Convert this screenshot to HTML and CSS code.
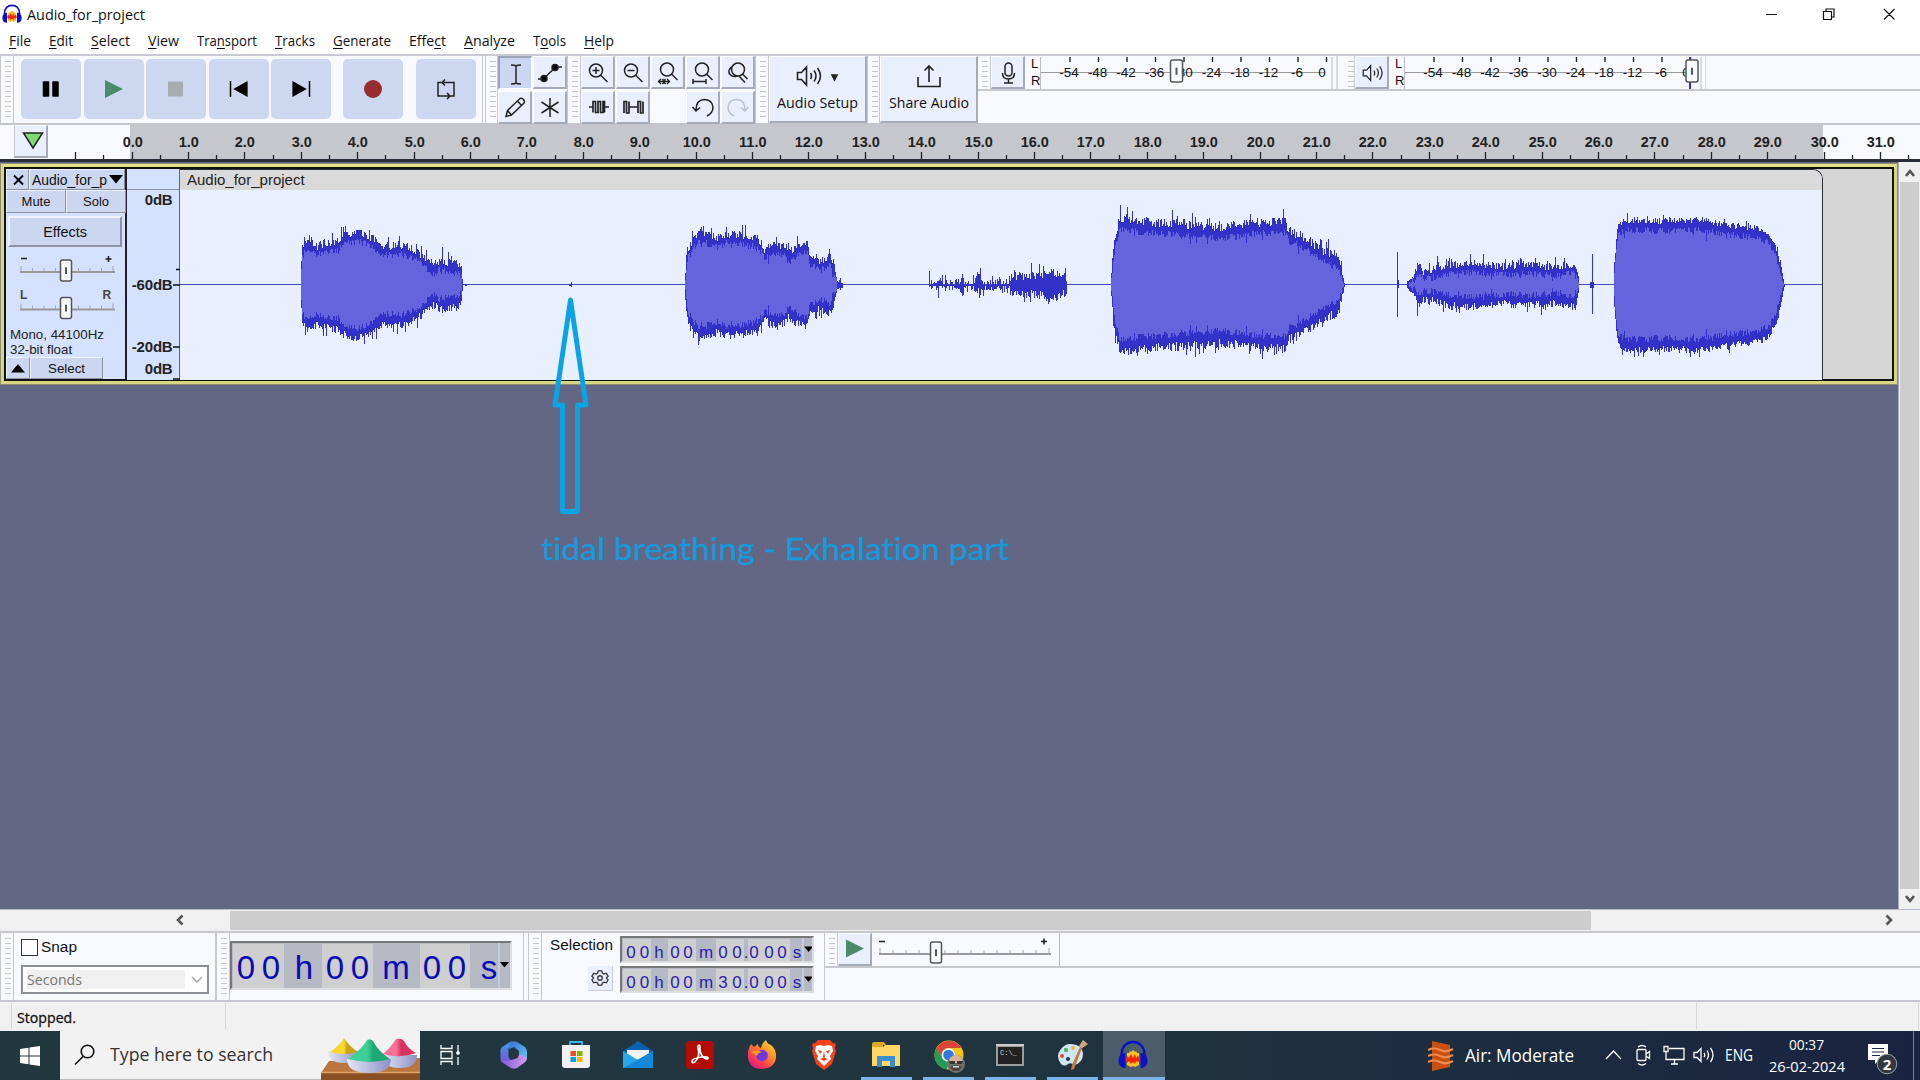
FILE: index.html
```html
<!DOCTYPE html>
<html lang="en">
<head>
<meta charset="utf-8">
<title>Audio_for_project</title>
<link rel="stylesheet" href="styles.css">
</head>
<body>
<svg width="0" height="0" class="defs">
  <defs>
    <linearGradient id="bowl" x1="0" x2="1"><stop offset="0" stop-color="#e4e6f5"/><stop offset="1" stop-color="#8d90c4"/></linearGradient>
    <linearGradient id="yel" x1="0" x2="1"><stop offset=".5" stop-color="#f7d92c"/><stop offset=".6" stop-color="#c9a21a"/></linearGradient>
    <linearGradient id="grn" x1="0" x2="1"><stop offset=".45" stop-color="#3fd09a"/><stop offset=".6" stop-color="#1fa873"/></linearGradient>
    <linearGradient id="pnk" x1="0" x2="1"><stop offset=".4" stop-color="#f7709a"/><stop offset=".55" stop-color="#d8305f"/></linearGradient>
    <linearGradient id="ff" x1="1" y1="0" x2=".2" y2="1"><stop offset="0" stop-color="#fff04a"/><stop offset=".4" stop-color="#ff9226"/><stop offset=".75" stop-color="#ff3b50"/><stop offset="1" stop-color="#e01490"/></linearGradient>
    <linearGradient id="m1" x1="0" y1="0" x2="0" y2="1"><stop offset="0" stop-color="#3aa0ea"/><stop offset="1" stop-color="#7a4fd0"/></linearGradient>
    <linearGradient id="m2" x1="0" y1="0" x2="1" y2="1"><stop offset="0" stop-color="#3d6fd8"/><stop offset="1" stop-color="#5ac8f2"/></linearGradient>
    <linearGradient id="m3" x1="0" y1="0" x2="1" y2="0"><stop offset="0" stop-color="#7b5bd6"/><stop offset="1" stop-color="#d79af0"/></linearGradient>
    <symbol id="audacity" viewBox="0 0 30 30">
      <path d="M9 13h2l1-2 1 1 2-2 2 2 1-1 1 2h2v12l-2 1-2 1-2-1-2 1-2-1-2-1z" fill="#ffc02a"/>
      <path d="M8 18l2-2 1 2 2-4 2 4 2-4 1 4 2-2 2 2v3l-2 1-2-1-1 3-2-2-2 2-2-3-1 2-2-2z" fill="#f0280a"/>
      <path d="M3.600 15C3.600 6 9 2 15 2s11.400 4 11.400 13" fill="none" stroke="#0a12c8" stroke-width="2.400"/>
      <path d="M7.500 13v15C3 28 .500 25 .500 20.500S3 13 7.500 13zM22.500 13v15c4.500 0 7-3 7-7.500S27 13 22.500 13z" fill="#0a12c8"/>
    </symbol>
    <symbol id="speaker" viewBox="0 0 28 22"><path d="M1.500 7.500h4l5-5.500v18l-5-5.500h-4zM14.500 8q2 3 0 6M18 5.500q4 5.500 0 11M21.500 3q6 8 0 16"/></symbol>
  </defs>
</svg>

<header class="title">
  <svg class="appicon" viewBox="0 0 30 30"><use href="#audacity"/></svg>
  <span class="fit ui t14" data-w="118">Audio_for_project</span>
  <svg class="winbtns" width="150" height="29" fill="none" stroke="#111" stroke-width="1.200"><path d="M10 14.500h11M67.500 11.500h8v8h-8zM70 11V9h8v8h-2.500M128 9l10.500 10.500M138.500 9L128 19.500"/></svg>
</header>

<nav class="menu ui">
  <span class="fit" data-w="22"><u>F</u>ile</span><span class="fit" data-w="24"><u>E</u>dit</span><span class="fit" data-w="39"><u>S</u>elect</span><span class="fit" data-w="31"><u>V</u>iew</span><span class="fit" data-w="60">Tra<u>n</u>sport</span><span class="fit" data-w="40"><u>T</u>racks</span><span class="fit" data-w="58"><u>G</u>enerate</span><span class="fit" data-w="37">Effe<u>c</u>t</span><span class="fit" data-w="51"><u>A</u>nalyze</span><span class="fit" data-w="33">T<u>o</u>ols</span><span class="fit" data-w="30"><u>H</u>elp</span>
</nav>

<section class="tools">
  <i class="grip g-first"></i>
  <div class="transport">
    <button><svg viewBox="0 0 60 60"><path d="M22.500 23h5v14h-5zM32 23h5v14h-5z" fill="#000" stroke="#000" stroke-width="1.500" stroke-linejoin="round"/></svg></button>
    <button><svg viewBox="0 0 60 60"><path d="M21 21l18 9-18 9z" fill="#4b8b6b"/></svg></button>
    <button><svg viewBox="0 0 60 60"><path d="M22 22.500h15v15H22z" fill="#a7abb2"/></svg></button>
    <button><svg viewBox="0 0 60 60"><path d="M38 23v14l-12.500-7z" fill="#000" stroke="#000" stroke-width="1.200"/><path d="M21.500 22v16" stroke="#000" stroke-width="1.500"/></svg></button>
    <button><svg viewBox="0 0 60 60"><path d="M22 23v14l12.500-7z" fill="#000" stroke="#000" stroke-width="1.200"/><path d="M38.500 22v16" stroke="#000" stroke-width="1.500"/></svg></button>
    <button class="ml"><svg viewBox="0 0 60 60"><circle cx="30" cy="30" r="9" fill="#962d2f"/></svg></button>
    <button class="ml"><svg viewBox="0 0 60 60" fill="none" stroke="#222" stroke-width="1.500"><path d="M26 23.500h-4V37h11M27.500 23.500H38V37h-4M29 20.500l-3 3 3 3M31 34l3 3-3 3"/></svg></button>
  </div>
  <i class="grip"></i>
  <div class="grid two">
    <button class="tb on"><svg viewBox="0 0 34 33"><path d="M12 8q4 0 5 1 1-1 5-1M17 9v17M12 27q4 0 5-1 1 1 5 1"/></svg></button>
    <button class="tb"><svg viewBox="0 0 34 33"><path d="M5 23h5L23 11h6"/><circle cx="11" cy="22.500" r="3" fill="#000"/><circle cx="22" cy="11.500" r="3" fill="#000"/></svg></button>
    <button class="tb"><svg viewBox="0 0 34 33"><path d="M8 25.500l1.500-6L22 7.500q2-1 3.500 1t.500 3.500L13.500 24zM19.500 10l4 4.500M9.500 19.500l4 4.500"/></svg></button>
    <button class="tb"><svg viewBox="0 0 34 33"><path d="M17 7v19M8.500 11l17 11M25.500 11l-17 11"/></svg></button>
  </div>
  <i class="grip g-edit"></i>
  <div class="grid five">
    <button class="tb"><svg viewBox="0 0 34 33"><circle cx="15" cy="14.500" r="6.500"/><path d="M19.500 19l7 7M11.500 14.500h7M15 11v7"/></svg></button>
    <button class="tb"><svg viewBox="0 0 34 33"><circle cx="15" cy="14.500" r="6.500"/><path d="M19.500 19l7 7M11.500 14.500h7"/></svg></button>
    <button class="tb"><svg viewBox="0 0 34 33"><circle cx="16" cy="13.500" r="6.500"/><path d="M20.500 18l6 6M7 25.500h12M10 23l-2.500 2.500L10 28M16 23l2.500 2.500L16 28M11.500 23l2 2.500-2 2.500M14.500 23l-2 2.500 2 2.500" stroke-width="1.300"/></svg></button>
    <button class="tb"><svg viewBox="0 0 34 33"><circle cx="16" cy="13.500" r="6.500"/><path d="M20.500 18l6 6M7 25.500h13M7 23v5M20 23v5"/></svg></button>
    <button class="tb"><svg viewBox="0 0 34 33"><circle cx="17" cy="13.500" r="6.500"/><path d="M21.500 18l5 5M11 11q-5 3-2 7.500 3 3 7 1.500M18 20l6 6.500"/></svg></button>
    <button class="tb"><svg viewBox="0 0 34 33"><path d="M8 16h4M23.500 16H28M12 21.500v-11h2.500v11H17v-11h2.500v11H22v-11h1.500v11" stroke-width="1.700"/></svg></button>
    <button class="tb"><svg viewBox="0 0 34 33"><path d="M8 22V10.500h2.500V22H13V10.500M13 16h9M22 22V10.500h2.500V22H27V10.500" stroke-width="1.700"/></svg></button>
    <span></span>
    <button class="tb"><svg viewBox="0 0 34 33"><path d="M10 19q0-10 8-10.500 8 0 9 7.500 0 6-6 9M6.500 16l3.500 4 4-3.500"/></svg></button>
    <button class="tb dim"><svg viewBox="0 0 34 33"><path d="M24 19q0-10-8-10.500-8 0-9 7.500 0 6 6 9M27.500 16L24 20l-4-3.500"/></svg></button>
  </div>
  <i class="grip g-audio"></i>
  <button class="big"><svg width="44" height="26" class="ln"><use href="#speaker" x="0" y="1" width="28" height="22"/><path d="M36 11h5l-2.500 5z" fill="#222"/></svg><span class="fit ui" data-w="81">Audio Setup</span></button>
  <i class="grip"></i>
  <button class="big share"><svg width="26" height="26" class="ln"><path d="M2 13v9.500h22V13M13 18V2M8.500 6.500L13 2l4.500 4.500"/></svg><span class="fit ui" data-w="80">Share Audio</span></button>
  <div class="meters">
    <div class="meterrow">
      <i class="grip short"></i>
      <button class="tb mic"><svg viewBox="0 0 34 33"><rect x="14" y="7" width="7" height="13" rx="3.500"/><path d="M11.500 17q0 6 6 6t6-6M17.500 23v4M13 27h9"/></svg></button>
      <div class="lr"><span>L</span><span>R</span></div>
      <svg class="meter" id="rec" width="304" height="33"></svg>
      <i class="grip short g2"></i>
      <button class="tb"><svg viewBox="0 0 34 33"><use href="#speaker" x="7" y="8" width="23" height="18"/></svg></button>
      <div class="lr"><span>L</span><span>R</span></div>
      <svg class="meter" id="play" width="302" height="33"></svg>
    </div>
  </div>
</section>

<section class="ruler">
  <button class="tb pin"><svg viewBox="0 0 34 33"><path d="M9.500 8h19L19 23z" fill="#7fd973" stroke="#222"/></svg></button>
  <svg id="time" width="1872" height="34"></svg>
</section>

<main class="work">
  <div class="tracks">
    <div class="track">
      <div class="panel">
        <div class="row r1"><button class="x"><svg width="22" height="20"><path d="M7 5.500l9 9M16 5.500l-9 9" stroke="#000" stroke-width="1.800"/></svg></button><button class="name"><span class="fit" data-w="75">Audio_for_p</span><svg width="14" height="9"><path d="M0 0h14L7 8.500z"/></svg></button></div>
        <div class="row r2"><button>Mute</button><button>Solo</button></div>
        <button class="fx">Effects</button>
        <svg class="sliders" width="118" height="78"><g id="vol"></g><g id="pan"></g><path d="M14 9.500h6M98.500 10h6M101.500 7v6" stroke="#222" stroke-width="1.600"/><text x="13" y="50">L</text><text x="95.500" y="50">R</text></svg>
        <p class="info">Mono, 44100Hz<br>32-bit float</p>
        <div class="row r3"><button class="up"><svg width="14" height="9"><path d="M0 8.500h14L7 0z"/></svg></button><button class="sel">Select</button></div>
      </div>
      <svg class="db" width="53" height="211"><path d="M0 20.500h53" stroke="#8a8f9c"/><path d="M52.500 0v211" stroke="#666"/><path d="M46 116h7M46 178h7M46 210h7M49 100.500h4" stroke="#111" stroke-width="1.300"/><g text-anchor="end"><text x="45.500" y="36">0dB</text><text x="45.500" y="121">-60dB</text><text x="45.500" y="183">-20dB</text><text x="45.500" y="205">0dB</text></g></svg>
      <div class="clip"><div class="cliphead">Audio_for_project</div><svg id="wave" viewBox="180 190 1642 190" width="1642" height="190" shape-rendering="crispEdges"></svg></div>
    </div>
    <svg class="note" width="500" height="290" viewBox="530 290 500 290"><path d="M570.500 300l15.500 105h-8.500v106.500H562.500V405H555z" fill="none" stroke="#0aa3e6" stroke-width="5" stroke-linejoin="round"/><text x="541" y="559.500" textLength="468" lengthAdjust="spacingAndGlyphs">tidal breathing - Exhalation part</text></svg>
  </div>
  <div class="vscroll"><svg width="21" height="20"><path d="M7 14l4-5 4 5"/></svg><i></i><svg width="21" height="20"><path d="M7 7l4 5 4-5"/></svg></div>
</main>
<div class="hscroll"><svg width="20" height="22"><path d="M12.500 5.500L8 10l4.500 4.500"/></svg><i></i><svg width="20" height="22"><path d="M7.500 5.500L12 10l-4.500 4.500"/></svg></div>

<section class="bottom">
  <i class="grip"></i>
  <div class="snap"><label><i></i><span class="fit ar15" data-w="36">Snap</span></label><div class="combo"><span><b class="fit" data-w="55">Seconds</b></span><svg width="12" height="8"><path d="M1 1l5 5 5-5" fill="none" stroke="#aaa" stroke-width="1.500"/></svg></div></div>
  <i class="grip"></i>
  <div class="bigtime"><svg id="bt" width="279" height="46"></svg></div>
  <i class="grip g3"></i>
  <div class="selname"><span>Selection</span><button class="gear"><svg width="18" height="18" viewBox="0 0 18 18"><path d="M7 1h4l.600 2.600 1.800 1L16 3.800l2 3.200-2 2 2 2-2 3.400-2.600-.800-1.800 1L11 17H7l-.600-2.400-1.800-1L2 14.400 0 11l2-2-2-2 2-3.200 2.600.800 1.800-1z"/><circle cx="9" cy="9" r="2.500"/></svg></button></div>
  <div class="seltimes"><svg id="s0" width="194" height="27"></svg><svg id="s1" width="194" height="27"></svg></div>
  <div class="speed"><div class="speedrow"><i class="grip short"></i><button class="tb"><svg viewBox="0 0 34 33"><path d="M8 6.500l18 9-18 9z" fill="#4b8b6b" stroke="none"/></svg></button><svg id="spd" width="189" height="33"></svg></div></div>
</section>

<footer class="status ui"><span class="s0"></span><span class="s1"><b class="fit" data-w="59">Stopped.</b></span><span class="s2"></span><span class="s3"></span></footer>

<div class="taskbar ui">
  <div class="start"><svg width="20" height="20" fill="#fff"><path d="M0 3l8.500-1.300V9.500H0zM9.500 1.500L20 0v9.500H9.500zM0 10.500h8.500v7.800L0 17zM9.500 10.500H20V20L9.500 18.500z"/></svg></div>
  <div class="search"><svg width="22" height="22" fill="none" stroke="#111" stroke-width="1.600"><circle cx="13.500" cy="7.500" r="6.300"/><path d="M9 12.500L1 20.500"/></svg><span class="fit" data-w="163">Type here to search</span>
    <svg class="holi" width="100" height="49"><path d="M9 30l-8 12v7h99V27z" fill="#b9763f"/><path d="M1 42h99v7H1z" fill="#8a4f22"/><path d="M1 41.500h99" stroke="#e2a564" stroke-width="1.500"/><path d="M8 20h32q0 12-16 12T8 20z" fill="url(#bowl)"/><path d="M10 21Q20 14 24 7q5 8 14 14-14 4-28 0z" fill="url(#yel)"/><path d="M62 24h35q0 13-17 13T62 24z" fill="url(#bowl)"/><path d="M63 23Q72 15 76 8q6-1 8 2 4 8 12 12-16 6-33 1z" fill="url(#pnk)"/><path d="M27 28h44q0 14-22 14T27 28z" fill="url(#bowl)"/><path d="M28 28Q42 18 47 9q3-2 6 1 5 10 17 18-20 6-42 0z" fill="url(#grn)"/></svg>
  </div>
  <div class="apps">
    <div class="app tv"><svg width="22" height="22" fill="none" stroke="#fff" stroke-width="1.300"><path d="M2 1v3.500h11V1M2 7.500h11v7H2zM2 21v-3.500h11V21M19 1v8M19 13v8"/><circle cx="19" cy="9" r="1.200" fill="#fff"/></svg></div>
    <div class="app"><svg width="30" height="30"><path d="M11 2L3 7Q1 9 1.500 12v8l8 4 3-3-3-4V8l6-5q-2-2-4.500-1z" fill="url(#m1)"/><path d="M11 2q4-1.500 7 0l8 5q2 2 2 5v7l-8-3v-5l-5-4-5 2z" fill="url(#m2)"/><path d="M28 18q0 3-3 5l-7 5q-3 1.500-6 0l-8-5q-2-1-2.500-3l8 1 9-3 2-4z" fill="url(#m3)"/></svg></div>
    <div class="app"><svg width="30" height="30"><path d="M9 6V2h12v4" fill="none" stroke="#3fb2e6" stroke-width="1.800"/><path d="M1 5h28v20q0 3-3 3H4q-3 0-3-3z" fill="#f1f1f1"/><path d="M9.500 11H15v5H9.500z" fill="#f04e1f"/><path d="M16 11h5.500v5H16z" fill="#7cb900"/><path d="M9.500 17H15v5H9.500z" fill="#00a0ea"/><path d="M16 17h5.500v5H16z" fill="#fdb700"/></svg></div>
    <div class="app"><svg width="32" height="30"><path d="M1 11L16 1l15 10v6H1z" fill="#0a5fae"/><path d="M5 10h22v10H5z" fill="#f3f3f3"/><path d="M1 11l15 9 15-9v17H1z" fill="#28a8ea"/><path d="M1 28l30-17v17z" fill="#1687d6"/></svg></div>
    <div class="app"><svg width="28" height="28"><rect width="28" height="28" rx="4" fill="#b30b00"/><path d="M6 20c0-3 16-6 16-3s-9-1-8-11c.500-3-3-2-2 1 2 7-1 12-3 14-2 1-3 1-3-1z" fill="none" stroke="#fff" stroke-width="1.700"/></svg></div>
    <div class="app"><svg width="30" height="30"><path d="M2 8l2-4 3 3 4-3q0 3 3 4 1-5 5-8 1 4 5 5 5 4 5 11 0 12-14 13Q2 29 1 17q-.500-5 1-9z" fill="url(#ff)"/><circle cx="15" cy="15.500" r="5.800" fill="#7038d8"/><path d="M4 12q6-3 11 0-5 1-5 4z" fill="#ff9a20"/></svg></div>
    <div class="app"><svg width="28" height="32"><path d="M8 1h12l3 3 3 1-1 4 1 3-4 13-8 6-8-6-4-13 1-3-1-4 3-1z" fill="#f4401b"/><path d="M6 7l4-1 4 1 4-1 4 1 1 5-3 5 1 3-7 7-7-7 1-3-3-5z" fill="#fff"/><path d="M8 11l4 1-2 3zM20 11l-4 1 2 3zM14 12l1 6-1 1-1-1zM10 20l4-1.500 4 1.500-4 2z" fill="#f4401b"/></svg></div>
    <div class="app run"><svg width="28" height="28"><path d="M0 3q0-2 2-2h10l2 3h-3v4H0z" fill="#e0a81c"/><path d="M0 6h11l2-2h15v21H0z" fill="#ffd766"/><path d="M5 15h18v11h-5v-6h-8v6H5z" fill="#3a8fd0"/></svg></div>
    <div class="app run"><svg class="chrome" width="32" height="34"><circle cx="15" cy="15" r="14.500" fill="#f3c519"/><path d="M2.500 8A14.500 14.500 0 0 1 27.500 8H15a7 7 0 0 0-6 11z" fill="#dd4337"/><path d="M2.500 8l7 12 6 1-3 8.500A14.500 14.500 0 0 1 2.500 8z" fill="#1f9d54"/><circle cx="14.500" cy="15" r="6.800" fill="#fff"/><circle cx="14.500" cy="15" r="5.300" fill="#2f78e6"/><circle cx="22" cy="24" r="9" fill="#77716c"/><path d="M15 19q7-8 14 0l-2 4h-10z" fill="#d9b394"/><path d="M15 21h6v3h-5zM23 21h6l-1 3h-5z" fill="#3a3633"/><path d="M16 27q6-4 12 0l-3 4h-6z" fill="#4a4542"/><path d="M19 26h6v1.500h-6z" fill="#ddd"/></svg></div>
    <div class="app run"><svg width="28" height="24"><path d="M0 1h28v22H0z" fill="#9a9c9e"/><path d="M2 4h24v17H2z" fill="#222"/><path d="M0 1h28v2H0z" fill="#ccc"/><text x="4" y="12" class="cmd">C:\_</text></svg></div>
    <div class="app run"><svg width="32" height="32"><path d="M14 5q12 0 13 10 0 9-9 11-3-3-6-1-3 3-7 0-6-8 0-15 4-5 9-5z" fill="#cfe6f5"/><circle cx="6" cy="17" r="2" fill="#e0473c"/><circle cx="10" cy="11" r="2.200" fill="#4db25b"/><circle cx="17" cy="9" r="2" fill="#f5b52e"/><circle cx="12" cy="20" r="2" fill="#22363f"/><path d="M27 1l5 4-7 5-2-3z" fill="#d0a878"/><path d="M24 8l2 1-8 21-3 1 1-5z" fill="#c9783a"/></svg></div>
    <div class="app run cur"><svg width="30" height="30"><use href="#audacity"/></svg></div>
  </div>
  <div class="tray">
    <svg class="air" width="26" height="30"><path d="M4 0l18 4v22L4 30z" fill="#c9500f"/><path d="M0 9q6-3 12 0t13-1M0 15q6-3 12 0t13-1M0 21q6-3 12 0t13-1" fill="none" stroke="#f08a50" stroke-width="2.200"/></svg>
    <span class="fit t18" data-w="109">Air: Moderate</span>
    <svg class="icons" width="112" height="24" fill="none" stroke="#fff" stroke-width="1.300"><path d="M1 16l7.500-8 7.500 8M32 7.500q0-1 1-1h7q1 0 1 1v9q0 1-1 1h-7q-1 0-1-1zM41 11l3.500-2.500v7L41 13M33 4q4-3 8 0M33 20.500q4 3 8 0M64 5.500h15v11H61v-5M69.500 17v4M66 21h7M59 3.500h4v5h-4zM61 8.500v3M89 9.500h3l4-4v13l-4-4h-3zM99 10q1.500 2 0 4M102 7.500q3 4.500 0 9M105.500 5q5 7 0 14"/></svg>
    <span class="fit t16 eng" data-w="28">ENG</span>
    <div class="clock"><span class="fit" data-w="35">00:37</span><span class="fit" data-w="76">26-02-2024</span></div>
    <svg class="notif" width="32" height="34"><path d="M1 2h20v16h-9l-4 4v-4H1z" fill="#fff"/><path d="M5 6.500h12M5 10h12M5 13.500h8" stroke="#1c2840" stroke-width="1.200"/><circle cx="20" cy="22" r="9.800" fill="#33373f" stroke="#9aa0a8"/><text x="20" y="27.500" text-anchor="middle">2</text></svg>
    <i class="peek"></i>
  </div>
</div>
<script src="app.js"></script>
</body>
</html>
```
FILE: app.js
```js
const $ = id => document.getElementById(id);

/* condensed labels: squeeze each to its column width */
document.querySelectorAll('.fit').forEach(el => {
  const w = +el.dataset.w, n = el.getBoundingClientRect().width;
  el.style.transform = `scaleX(${w / n})`;
  el.style.marginRight = `${w - n}px`;
});

/* timeline ruler */
let s = '<rect x="82" width="1693" height="34" fill="#c6c7cd"/>', ticks = '';
for (let i = -2; i <= 63; i++) {
  const x = Math.round(83.5 + i * 28.2) + .5, major = i % 2 === 0;
  ticks += `M${x} ${major ? 27 : 30}V34`;
  if (major && i >= 0) s += `<text x="${x + .3}" y="22">${(i / 2).toFixed(1)}</text>`;
}
$('time').innerHTML = s + `<path d="${ticks}" stroke="#222" stroke-width="1.3"/>`;

const thumb = (x, y, w = 12, h = 22) =>
  `<rect x="${x - w / 2}" y="${y}" width="${w}" height="${h}" rx="2" fill="#fafbff" stroke="#555" stroke-width="1.5"/><path d="M${x} ${y + h * .35}v${h * .32}" stroke="#555" stroke-width="2"/>`;

/* level meters */
function meter(id, end, knob) {
  let out = `<path d="M.5 1v32M${end + 1} 1v32M${end + 6} 0v33" stroke="#b9bcc4"/><path d="M1 16.500H${end - 7}" stroke="#999"/>`;
  for (let i = 0; i < 10; i++) {
    const x = 30 + i * 28.5;
    out += `<path d="M${x} 1v5" stroke="#222" stroke-width="1.4"/>`;
    const t = i === 9 ? '0' : String(-54 + i * 6), tx = i === 9 ? 282 : x - 1;
    out += `<text x="${tx}" y="20.500">${t}</text>`;
  }
  if (knob > 200) out += `<path d="M${knob - 2} 1v32" stroke="#3030d0" stroke-width="2"/>`;
  $(id).innerHTML = out + thumb(knob, 4);
}
meter('rec', 291, 136.5);
meter('play', 296, 288);

/* sliders */
function slider(x0, x1, y, n, knob, h) {
  let d = '';
  for (let i = 0; i <= n; i++) { const x = x0 + 1 + (x1 - x0 - 3) * i / n; d += `M${x} ${y}v${i === 0 || i === n ? -6 : -4}`; }
  return `<path d="${d}" stroke="#a5a8b0"/><path d="M${x0} ${y}H${x1}" stroke="#999" stroke-width="2"/>` + thumb(knob, y - 12, 11, h);
}
$('vol').innerHTML = slider(13, 108, 23, 8, 59, 21);
$('pan').innerHTML = slider(13, 108, 60.5, 8, 59, 21);
$('spd').innerHTML = slider(7, 179, 21, 13, 64, 21) +
  '<path d="M7 8.500h6M169 8.500h6M172 5.500v6" stroke="#222" stroke-width="1.6"/><path d="M187.500 0v33" stroke="#b9bcc4"/>';

/* numeric time displays */
function digits(id, chars, boxes, base, w, h, arrow) {
  let out = `<rect width="${w}" height="${h}" fill="#b4b9c4"/>`;
  boxes.forEach(b => out += `<rect x="${b[0]}" y="1" width="${b[1]}" height="${h - 2}" fill="#cfcfcf"/>`);
  chars.forEach(c => out += `<text x="${c[1] - 1}" y="${base}">${c[0]}</text>`);
  $(id).innerHTML = out + `<path d="M${arrow - 6} 0v${h}" stroke="#dde"/><path d="M${arrow - 5} ${h / 2 - 4}h9l-4.5 5.500z"/>`;
}
digits('bt', [['0', 15], ['0', 40], ['h', 73], ['0', 104], ['0', 129], ['m', 165], ['0', 201], ['0', 226], ['s', 258]],
  [[1, 51], [90, 51], [188, 50]], 36, 279, 46, 273);
const sel = d => [['0', 10], ['0', 23.5], ['h', 38], ['0', 54], ['0', 67], ['m', 85], [d, 102], ['0', 116], ['.', 125], ['0', 133], ['0', 148], ['0', 161], ['s', 176]];
const bx = [[1, 28], [46, 28], [94, 28], [126, 42]];
digits('s0', sel('0'), bx, 19.5, 195, 25, 187);
digits('s1', sel('3'), bx, 19.5, 195, 25, 187);

/* waveform: x, peak height pairs interpolated with deterministic jitter */
let seed = 7;
const rnd = () => (seed = (seed * 16807) % 2147483647) / 2147483647;
const segs = [
  { n: 6, core: 9, p: [301,25, 302,38, 305,43, 308,45, 315,39, 325,41, 335,44, 345,50, 355,53, 365,51, 375,45, 380,40, 388,39, 400,40, 410,37, 420,31, 428,25, 433,20, 440,25, 450,22, 458,21, 461,17, 462,5] },
  { n: 6, core: 9, p: [685,16, 687,34, 690,41, 696,50, 701,53, 715,47, 727,51, 745,49, 755,47, 761,42, 765,34, 771,41, 784,38, 788,32, 796,38, 807,42, 809,30, 820,24, 830,29, 833,20, 835,12, 837,5, 842,2] },
  { n: 7, core: 30, p: [929,1, 935,0, 938,3, 943,2, 948,1, 958,3, 961,8, 966,1, 975,5, 979,7, 984,0, 995,3, 1000,3, 1008,3, 1012,9, 1025,9, 1040,10, 1048,13, 1058,11, 1066,8] },
  { n: 7, core: 11, p: [1111,12, 1113,38, 1116,52, 1119,66, 1125,67, 1140,64, 1180,61, 1220,58, 1240,60, 1260,63, 1285,63, 1288,55, 1300,50, 1312,42, 1322,35, 1335,29, 1339,26, 1342,10, 1344,2] },
  { n: 6, core: 9, p: [1407,4, 1413,8, 1417,20, 1423,14, 1435,16, 1450,21, 1475,22, 1500,19, 1530,20, 1555,18, 1575,21, 1578,8] },
  { n: 5, core: 10, p: [1614,22, 1616,48, 1618,60, 1624,65, 1640,65, 1660,64, 1700,65, 1730,60, 1762,56, 1770,49, 1776,37, 1780,22, 1783,6, 1784,2] }
];
let peak = '', core = '';
const C = 285;
for (const g of segs) {
  const p = g.p, end = p[p.length - 2];
  for (let x = p[0], k = 0; x <= end; x++) {
    while (k + 3 < p.length - 1 && x > p[k + 2]) k += 2;
    const t = Math.min(1, Math.max(0, (x - p[k]) / (p[k + 2] - p[k])));
    const a = p[k + 1] + (p[k + 3] - p[k + 1]) * t;
    const j = () => (rnd() - .5) * g.n * 1.3 + (rnd() > .85 ? rnd() * g.n * 1.5 : 0);
    const q = a < 14 && g.core < 20 ? .25 : 1;
    const u = Math.max(.5, a + j() * q), d = Math.max(.5, a + j() * q);
    peak += `M${x} ${(C - u).toFixed(1)}h1V${(C + d).toFixed(1)}h-1z`;
    const c = a - Math.min(g.core, a * .5) + (rnd() - .5) * 7 - (rnd() > .96 ? 6 : 0);
    if (g.core < 20 && a > 5 && c > 1) core += `M${x} ${(C - c).toFixed(1)}h1V${(C + c - 1).toFixed(1)}h-1z`;
  }
}
peak += 'M399 236h1v20h-1zM442 247h1v25h-1zM448 252h1v20h-1zM703 226h1v20h-1zM829 249h1v20h-1zM1397 252h1v65h-1zM1398 280h1v8h-1zM1592 254h1v60h-1zM1590 282h4v6h-4zM569 284h2v2h-2zM571 282h1v5h-1zM465 284h2v2h-2zM840 278h1v12h-1z';
$('wave').innerHTML = `<path d="M180 284.500H1822" stroke="#4a4ac4"/><path d="${peak}" fill="#3232c8"/><path d="${core}" fill="#6464dc"/>`;
```
FILE: styles.css
```css
* { box-sizing: border-box; }
body { margin: 0; width: 1920px; height: 1080px; overflow: hidden; display: flex; flex-direction: column; background: #fff; font-family: "Liberation Sans", Arial, sans-serif; font-size: 13.300px; color: #111; }
button { appearance: none; border: 0; padding: 0; margin: 0; font: inherit; color: inherit; background: none; display: flex; align-items: center; justify-content: center; }
svg { display: block; flex: none; }
i { display: block; font-style: normal; }
.defs { position: absolute; }
.ui { font-family: "Open Sans", "Noto Sans", sans-serif; }
.fit { display: inline-block; white-space: nowrap; transform-origin: 0 50%; flex: none; }
.t14 { font-size: 14px; }
.ar15 { font-size: 15.500px; }

.title { height: 30px; display: flex; align-items: center; padding: 0 14px 2px 2px; gap: 5px; }
.appicon { width: 20px; height: 20px; }
.winbtns { margin-left: auto; }
.menu { height: 24px; display: flex; gap: 18px; padding-left: 9px; line-height: 22px; font-size: 14.500px; }
.menu u { text-underline-offset: 2px; text-decoration-thickness: 1px; }

.tools { height: 71px; display: flex; background: #f7f9ff; border-top: 2px solid #c9cacf; border-bottom: 2px solid #c4c6cc; }
.grip { width: 14px; flex: none; border: solid #c6c8ce; border-width: 0 1px; background: repeating-linear-gradient(#c3c6cc 0 1px, transparent 1px 5px) 4px 5px / 6px 58px no-repeat; }
.grip.short { height: 33px; background-size: 6px 26px; }
.transport { width: 469px; display: flex; align-items: center; padding: 0 0 2px 7px; gap: 2.600px; border-right: 1px solid #c6c8ce; margin-right: 2px; }
.transport button { width: 60px; height: 60px; border-radius: 5px; background: #cdd8f0; }
.transport .ml { margin-left: 9.500px; }
.transport svg { width: 60px; height: 60px; }
.grid { display: grid; gap: 2px 1px; grid-auto-rows: 33px; }
.two { grid-template-columns: 34px 34px; }
.five { grid-template-columns: repeat(5, 34px); }
.tb { width: 34px; height: 33px; flex: none; background: #e9effd; border: solid; border-width: 1px 2px 2px 1px; border-color: #fff #a6abba #a6abba #fff; }
.tb svg { width: 34px; height: 33px; margin: -1px; fill: none; stroke: #222; stroke-width: 1.500; }
.tb.on { background: #cbd7f0; border-width: 2px 1px 1px 2px; border-color: #9ba3b8 #fff #fff #9ba3b8; }
.tb.dim svg { stroke: #bcc1cc; }
.tools > .grip { width: 13px; }
.tools > .g-first, .tools > .g-edit, .tools > .g-audio { width: 14px; }
.ln { fill: none; stroke: #222; stroke-width: 1.600; }
.big { width: 98px; height: 67px; flex-direction: column; gap: 3px; padding-bottom: 1px; font-size: 14.500px; line-height: 20px; background: #e9effd; border: solid; border-width: 1px 2px 2px 1px; border-color: #fff #a6abba #a6abba #fff; }
.meters { flex: 1; }
.meterrow { height: 35px; display: flex; border-bottom: 2px solid #c6c8ce; }
.meterrow .grip { width: 13px; border-left: 0; }
.meterrow .g2 { width: 11px; }
.lr { width: 15px; padding-left: 6px; display: flex; flex-direction: column; font-size: 13px; line-height: 17px; margin-top: -1px; }
.meter text { font-size: 13.500px; text-anchor: middle; fill: #111; }

.ruler { height: 34px; display: flex; padding-left: 14px; background: #f7f9ff; }
.pin { border-left: 1px solid #c6c8ce; }
#time text { font: bold 14.500px "Liberation Sans", Arial, sans-serif; text-anchor: middle; fill: #222; }

.work { height: 750px; display: flex; border-top: 3px solid #2b2e38; background: #636784; }
.tracks { width: 1899px; position: relative; padding-top: 1px; border-right: 1px solid #a5aac4; }
.track { height: 222px; display: flex; border: 4px solid #d8d682; border-top-color: #e2df88; outline: 1px solid #8e8f72; outline-offset: -1px; box-shadow: inset 0 0 0 2px #111; padding: 2px; background: #d6d6d6; }
.panel { width: 121px; border-right: 2px solid #222; background: #d4e1ff; display: flex; flex-direction: column; align-items: flex-start; height: 210px; }
.panel button { background: #cbd7f0; border: 1px solid; border-color: #eef3ff #8d93a2 #8d93a2 #eef3ff; }
.row { display: flex; }
.r1 { height: 21px; }
.r1 button { height: 21px; }
.x { width: 23px; }
.name { width: 96px; gap: 2px; font-size: 14.500px; }
.r2 button { height: 23px; width: 60px; font-size: 13px; }
.panel .fx { width: 114px; height: 31px; margin: 3px 0 2px 2px; font-size: 14.400px; border-width: 2px; }
.sliders text { font-size: 12px; font-weight: bold; fill: #444; }
.sliders { margin-left: 1px; }
.info { margin: 0 0 0 4px; line-height: 15px; font-size: 13.300px; color: #222; white-space: nowrap; height: 30px; }
.r3 { margin-top: auto; }
.r3 button { height: 22px; }
.r3 .up { width: 24px; }
.r3 .sel { width: 73px; }
.db { background: #d4e1ff; width: 53px; }
.db text { font-size: 15px; font-weight: bold; fill: #222; letter-spacing: -.200px; }
.clip { width: 1643px; height: 211px; border: 1px solid #2a3038; border-width: 1px 1px 0 0; border-top-right-radius: 10px; overflow: hidden; background: #e8f0ff; }
.cliphead { height: 20px; background: #dadada; font-size: 15px; line-height: 20px; padding-left: 7px; color: #222; }
.note { position: absolute; left: 530px; top: 128px; }
.note text { font: 30px Lato, "Open Sans", sans-serif; font-variant-ligatures: none; fill: #1899dc; stroke: #1899dc; stroke-width: .300px; }
.vscroll { width: 21px; display: flex; flex-direction: column; background: #f0f0f0; }
.vscroll i { flex: 1; background: #cdcdcd; margin: 0 1px; }
.vscroll svg, .hscroll svg { fill: none; stroke: #555; stroke-width: 2.600; }
.hscroll { height: 22px; display: flex; background: #f0f0f0; border-top: 1px solid #b8bccf; padding: 0 21px 0 170px; }
.hscroll i { width: 1361px; margin: 1px auto 1px 40px; background: #cdcdcd; }

.bottom { height: 71px; display: flex; background: #f7f9ff; border-top: 2px solid #c6c8ce; border-bottom: 2px solid #c4c6cc; }
.snap { width: 202px; padding: 4px 0 0 7px; border-right: 1px solid #c6c8ce; }
.snap label { display: flex; align-items: center; gap: 3px; height: 20px; }
.snap label i { width: 17px; height: 17px; border: 1.500px solid #333; background: #fff; }
.combo { width: 188px; height: 29px; margin-top: 8px; border: 2px solid #8d8f98; background: #fff; display: flex; align-items: center; padding: 3px 4px; justify-content: space-between; }
.combo span { width: 158px; height: 19px; background: #f0f0f0; color: #777; font: 14.500px/19px "Open Sans", sans-serif; }
.combo b, .status b { font-weight: 400; }
.bigtime { width: 294px; padding: 8px 0 0 0; border-right: 1px solid #c6c8ce; }
.bigtime svg { border: 2px solid #777; border-right-color: #ddd; border-bottom-color: #ddd; width: 282px; height: 49px; }
#bt text { font: 33px "Liberation Sans", sans-serif; text-anchor: middle; fill: #0a0ab4; }
.bottom .g3 { width: 14px; margin-left: 4px; }
.selname { width: 78px; padding: 2px 7px 0 6px; font-size: 15.300px; line-height: 20px; display: flex; flex-direction: column; align-items: flex-end; gap: 11px; }
.gear { width: 25px; height: 25px; background: #e9effd; border: solid; border-width: 0 1px 1px 0; border-color: #c8cede; }
.gear svg { fill: none; stroke: #333; stroke-width: 1.400; overflow: visible; transform: scale(.9); }
.seltimes { width: 205px; padding: 3px 0 0 0; display: flex; flex-direction: column; gap: 3px; border-right: 1px solid #c6c8ce; }
.seltimes svg { border: 2px solid #777; border-right-color: #ddd; border-bottom-color: #ddd; }
.seltimes text { font: 17px "Liberation Sans", sans-serif; text-anchor: middle; fill: #2a22ae; }
.speed { flex: 1; }
.speedrow { display: flex; height: 35px; border-bottom: 2px solid #c6c8ce; }
.speedrow .grip { width: 13px; border-left: 0; }

.status { height: 29px; display: flex; background: #f0f0f0; font-size: 15px; line-height: 29px; padding-top: 1px; }
.status > span { border-right: 1px solid #d6d6d6; height: 26px; }
.status b { -webkit-text-stroke: .300px #111; }
.s0 { width: 12px; }
.s1 { width: 214px; padding-left: 5px; }
.s2 { width: 1471px; }
.s3 { width: 222px; }

.taskbar { height: 49px; display: flex; color: #fff; background: linear-gradient(90deg, #22383f, #20343f 55%, #1c2c40 80%, #1a2440); }
.start { width: 60px; display: flex; align-items: center; justify-content: center; }
.search { width: 360px; background: #f2f2f2; color: #333; display: flex; align-items: center; padding-left: 14px; gap: 14px; font-size: 18.500px; border-bottom: 1px solid #bbb; line-height: 24px; }
.search span { margin-top: -2px; }
.holi { margin-left: auto; }
.apps { display: flex; }
.app { width: 62px; height: 49px; display: flex; align-items: center; justify-content: center; position: relative; padding-bottom: 1px; }
.tv { width: 63px; padding-right: 4px; }
.chrome { margin: 3px 0 0 3px; }
.run::after { content: ""; position: absolute; left: 6px; right: 5px; bottom: 0; height: 3px; background: #7ab4e6; }
.cur { background: #4c5c69; padding-right: 2px; }
.cur::after { left: 0; right: 0; }
.cmd { font: 7px "Liberation Mono", monospace; fill: #ddd; }
.tray { margin-left: auto; display: flex; align-items: center; }
.air { margin-right: 11px; }
.t18 { font-size: 18px; margin-top: -2px; }
.t16 { font-size: 16px; margin-top: -1px; }
.icons { margin-left: 31px; margin-top: -2px; }
.eng { margin-left: 8px; }
.clock { width: 76px; margin-left: 16px; display: flex; flex-direction: column; align-items: flex-start; font-size: 15px; line-height: 22px; margin-top: -2px; }
.clock span:first-child { margin-left: 20px; }
.notif { margin-left: 22px; margin-top: 7px; }
.notif text { font: bold 15px "Open Sans", sans-serif; fill: #fff; }
.peek { width: 7px; height: 49px; margin-left: 14px; border-left: 1px solid #77808e; }
```
